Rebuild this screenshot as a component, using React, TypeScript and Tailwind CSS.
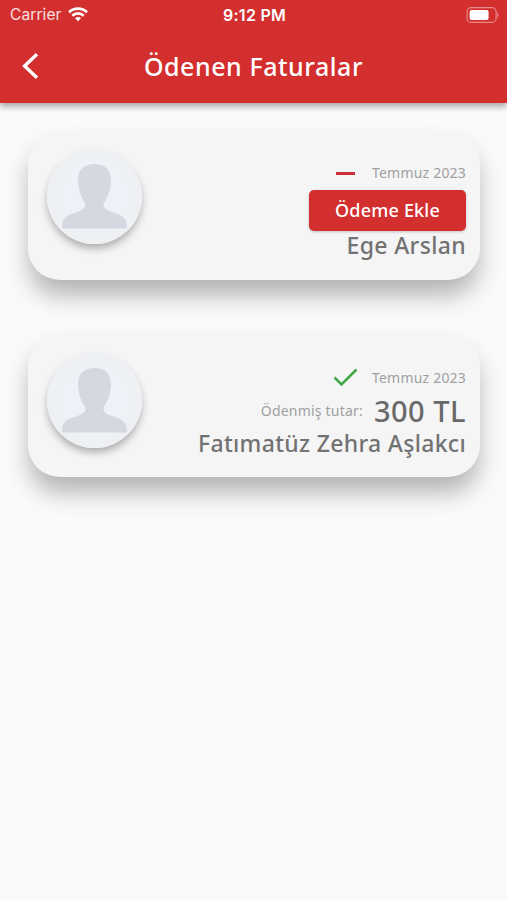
import type { ReactNode } from 'react';

function StatusBar() {
  return (
    <div className="grid h-[30px] grid-cols-3 items-center pl-[10px] pr-[8px] font-['Inter',sans-serif] text-[15.5px] leading-[30px] text-white">
      <div className="flex items-center gap-[6px] text-white/85">
        <span className="tracking-[0.1px]">Carrier</span>
        <svg className="-mt-px" width="20" height="15" viewBox="0 0 20 15" fill="none" stroke="white" strokeWidth="2.7">
          <path d="M1 5.2C6 .3 14 .3 19 5.2" />
          <path d="M4.3 8.7c3.3-3.1 8.1-3.1 11.4 0" />
          <path d="M7 11.2c1.8-1.5 4.2-1.5 6 0L10 14.2z" fill="white" stroke="none" />
        </svg>
      </div>
      <span className="text-center text-[16px] font-semibold leading-[29px] tracking-[0.25px]">9:12 PM</span>
      <svg className="-mt-px justify-self-end" width="33" height="16" viewBox="0 0 33 16" fill="none">
        <rect x="1.1" y=".6" width="29" height="14.8" rx="4" stroke="white" strokeOpacity=".45" strokeWidth="1.1" />
        <rect x="3.6" y="2.9" width="19" height="10.2" rx="2" fill="white" />
        <path d="M31.3 5.5c1.6.8 1.6 4.2 0 5z" fill="white" fillOpacity=".5" />
      </svg>
    </div>
  );
}

function Header() {
  return (
    <header className="relative h-[103px] bg-[#d32f2f] shadow-[0_4px_6px_rgba(0,0,0,0.3)]">
      <StatusBar />
      <div className="grid h-[73px] grid-cols-[60px_1fr_60px] items-center pb-[2px]">
        <svg className="ml-[22px]" width="18" height="28" viewBox="0 0 18 28" fill="none" stroke="white" strokeWidth="3.4">
          <path d="M15 2.3 2.6 14 15 25.7" />
        </svg>
        <h1 className="pt-[2px] text-center text-[25px] font-medium leading-none tracking-[0.55px] text-white">Ödenen Faturalar</h1>
      </div>
    </header>
  );
}

function Avatar() {
  return (
    <div className="size-[95px] rounded-full bg-[radial-gradient(circle,#eef2f8_35%,#eef0f3_70%)] shadow-[0_5px_8px_-1px_rgba(0,0,0,0.32)]">
      <svg width="95" height="95" viewBox="0 0 95 95" fill="#d4d8e0">
        <path d="M47.5 15C37 15 31 21 31 31c0 10 3.5 17.500 7 23 2 4-1.500 7-9 9.500-9 2.600-14 5-14 16h65C80 68.500 75 66.100 66 63.500c-7.500-2.500-11-5.500-9-9.500 3.500-5.500 7-13 7-23 0-10-6-16-16.500-16z" />
      </svg>
    </div>
  );
}

function Card({ className, children }: { className: string; children: ReactNode }) {
  return (
    <section className={`flex justify-between rounded-[32px] bg-[#f5f5f5] pl-[18.5px] pr-[14px] shadow-[0_17px_25px_-2px_rgba(0,0,0,0.29)] ${className}`}>
      <Avatar />
      <div className="flex flex-col items-end whitespace-nowrap">{children}</div>
    </section>
  );
}

function Month({ children }: { children: ReactNode }) {
  return (
    <div className="flex h-[22px] items-center">
      {children}
      <span className="text-[14px] leading-[22px] tracking-[0.2px] text-[#a0a0a0]">Temmuz 2023</span>
    </div>
  );
}

export default function App() {
  return (
    <div className="h-[900px] w-[507px] overflow-hidden bg-[#fafafa] font-['Noto_Sans',sans-serif]">
      <Header />
      <main className="flex flex-col gap-[53px] pl-[28px] pr-[27px] pt-[27px]">
        <Card className="h-[150px] pt-[19px]">
          <div className="pt-[13px]">
            <Month>
              <span className="mr-[17px] h-[3px] w-[19px] bg-[#cb3038]" />
            </Month>
          </div>
          <button className="mt-[6px] h-[41px] w-[157px] rounded-[5px] bg-[#d32f2f] text-[18px] font-medium leading-[41px] tracking-[0.2px] text-white shadow-[0_1px_3px_rgba(0,0,0,0.2)]">
            Ödeme Ekle
          </button>
          <p className="-mt-px text-[23px] font-medium leading-[30px] tracking-[0.35px] text-[#727272]">Ege Arslan</p>
        </Card>
        <Card className="h-[144px] pt-[19.5px]">
          <div className="pt-[14px]">
            <Month>
              <svg className="mr-[14px]" width="25" height="19" viewBox="0 0 25 19" fill="none" stroke="#43a84a" strokeWidth="2.5">
                <path d="M1.5 9.5 8.5 16.500 23.500 1.500" />
              </svg>
            </Month>
          </div>
          <div className="mt-[5px] flex h-[34px] items-center gap-[11px]">
            <span className="text-[14px] leading-[34px] tracking-[0.2px] text-[#a0a0a0]">Ödenmiş tutar:</span>
            <span className="text-[29px] font-medium leading-[34px] tracking-[0.5px] text-[#696969]">300 TL</span>
          </div>
          <p className="text-[23px] font-medium leading-[30px] tracking-[0.32px] text-[#727272]">Fatımatüz Zehra Aşlakcı</p>
        </Card>
      </main>
    </div>
  );
}
